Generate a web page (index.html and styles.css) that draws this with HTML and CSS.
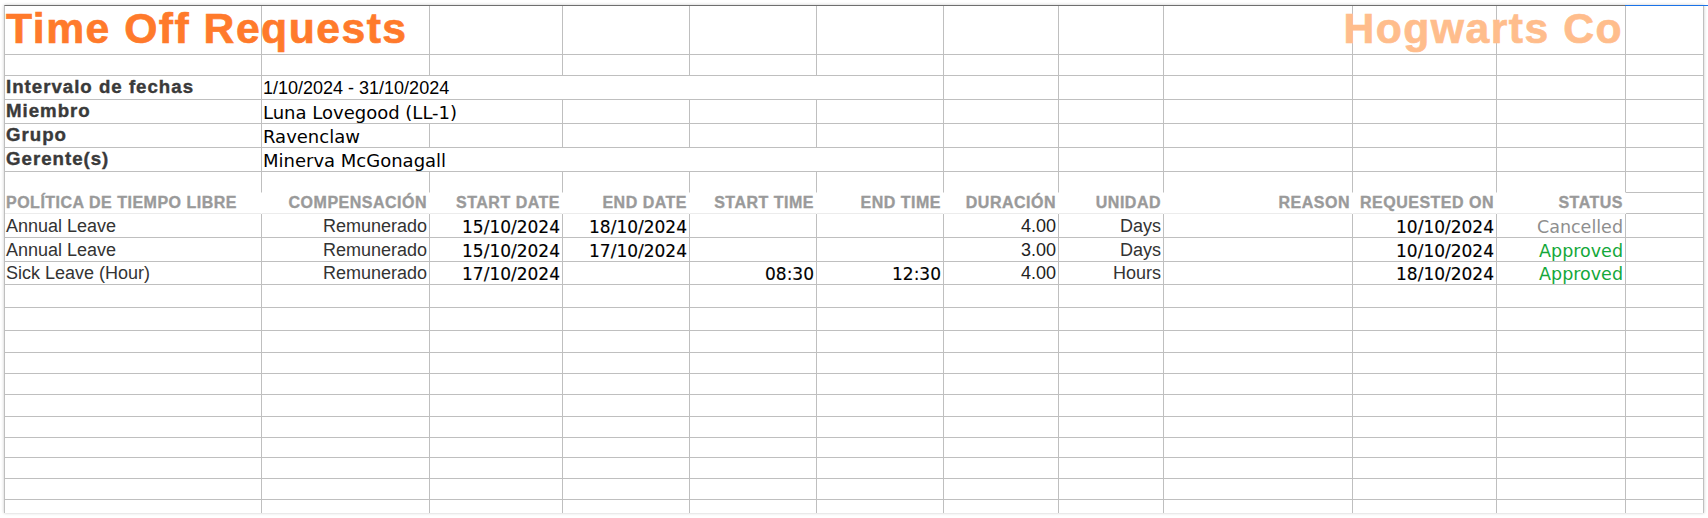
FILE: index.html
```html
<!DOCTYPE html>
<html lang="es">
<head>
<meta charset="utf-8">
<title>Time Off Requests</title>
<link rel="stylesheet" href="styles.css">
</head>
<body>
<div class="page">
  <div class="sheet">
    <div class="grid">
      <!-- row 1 -->
      <div class="c span2 title">Time Off Requests</div>
      <div class="c"></div><div class="c"></div><div class="c"></div><div class="c"></div><div class="c"></div><div class="c"></div>
      <div class="c span3 r brand">Hogwarts Co</div>
      <div class="c"></div>
      <!-- row 2 -->
      <div class="c"></div><div class="c"></div><div class="c"></div><div class="c"></div><div class="c"></div><div class="c"></div>
      <div class="c"></div><div class="c"></div><div class="c"></div><div class="c"></div><div class="c"></div><div class="c"></div>
      <!-- row 3 -->
      <div class="c lbl">Intervalo de fechas</div>
      <div class="c val span5">1/10/2024 - 31/10/2024</div>
      <div class="c"></div><div class="c"></div><div class="c"></div><div class="c"></div><div class="c"></div><div class="c"></div>
      <!-- row 4 -->
      <div class="c lbl">Miembro</div>
      <div class="c val dv span2">Luna Lovegood (LL-1)</div>
      <div class="c"></div><div class="c"></div><div class="c"></div><div class="c"></div><div class="c"></div>
      <div class="c"></div><div class="c"></div><div class="c"></div><div class="c"></div>
      <!-- row 5 -->
      <div class="c lbl">Grupo</div>
      <div class="c val dv">Ravenclaw</div>
      <div class="c"></div><div class="c"></div><div class="c"></div><div class="c"></div><div class="c"></div>
      <div class="c"></div><div class="c"></div><div class="c"></div><div class="c"></div><div class="c"></div>
      <!-- row 6 -->
      <div class="c lbl">Gerente(s)</div>
      <div class="c val dv span5">Minerva McGonagall</div>
      <div class="c"></div><div class="c"></div><div class="c"></div><div class="c"></div><div class="c"></div><div class="c"></div>
      <!-- row 7 -->
      <div class="c nob"></div><div class="c nob"></div><div class="c nob"></div><div class="c nob"></div>
      <div class="c nob"></div><div class="c nob"></div><div class="c nob"></div><div class="c nob"></div>
      <div class="c nob"></div><div class="c nob"></div><div class="c nob"></div><div class="c"></div>
      <!-- row 8: column headers -->
      <div class="c hd">POLÍTICA DE TIEMPO LIBRE</div>
      <div class="c hd r">COMPENSACIÓN</div>
      <div class="c hd r">START DATE</div>
      <div class="c hd r">END DATE</div>
      <div class="c hd r">START TIME</div>
      <div class="c hd r">END TIME</div>
      <div class="c hd r">DURACIÓN</div>
      <div class="c hd r">UNIDAD</div>
      <div class="c hd r">REASON</div>
      <div class="c hd r">REQUESTED ON</div>
      <div class="c hd r">STATUS</div>
      <div class="c"></div>
      <!-- row 9 -->
      <div class="c">Annual Leave</div>
      <div class="c r">Remunerado</div>
      <div class="c r dt">15/10/2024</div>
      <div class="c r dt">18/10/2024</div>
      <div class="c r dt"></div>
      <div class="c r dt"></div>
      <div class="c r num">4.00</div>
      <div class="c r">Days</div>
      <div class="c"></div>
      <div class="c r dt">10/10/2024</div>
      <div class="c r st cancel">Cancelled</div>
      <div class="c"></div>
      <!-- row 10 -->
      <div class="c">Annual Leave</div>
      <div class="c r">Remunerado</div>
      <div class="c r dt">15/10/2024</div>
      <div class="c r dt">17/10/2024</div>
      <div class="c r dt"></div>
      <div class="c r dt"></div>
      <div class="c r num">3.00</div>
      <div class="c r">Days</div>
      <div class="c"></div>
      <div class="c r dt">10/10/2024</div>
      <div class="c r st ok">Approved</div>
      <div class="c"></div>
      <!-- row 11 -->
      <div class="c">Sick Leave (Hour)</div>
      <div class="c r">Remunerado</div>
      <div class="c r dt">17/10/2024</div>
      <div class="c r dt"></div>
      <div class="c r dt">08:30</div>
      <div class="c r dt">12:30</div>
      <div class="c r num">4.00</div>
      <div class="c r">Hours</div>
      <div class="c"></div>
      <div class="c r dt">18/10/2024</div>
      <div class="c r st ok">Approved</div>
      <div class="c"></div>
      <!-- rows 12-22: empty -->
      <div class="c"></div><div class="c"></div><div class="c"></div><div class="c"></div><div class="c"></div><div class="c"></div><div class="c"></div><div class="c"></div><div class="c"></div><div class="c"></div><div class="c"></div><div class="c"></div>
      <div class="c"></div><div class="c"></div><div class="c"></div><div class="c"></div><div class="c"></div><div class="c"></div><div class="c"></div><div class="c"></div><div class="c"></div><div class="c"></div><div class="c"></div><div class="c"></div>
      <div class="c"></div><div class="c"></div><div class="c"></div><div class="c"></div><div class="c"></div><div class="c"></div><div class="c"></div><div class="c"></div><div class="c"></div><div class="c"></div><div class="c"></div><div class="c"></div>
      <div class="c"></div><div class="c"></div><div class="c"></div><div class="c"></div><div class="c"></div><div class="c"></div><div class="c"></div><div class="c"></div><div class="c"></div><div class="c"></div><div class="c"></div><div class="c"></div>
      <div class="c"></div><div class="c"></div><div class="c"></div><div class="c"></div><div class="c"></div><div class="c"></div><div class="c"></div><div class="c"></div><div class="c"></div><div class="c"></div><div class="c"></div><div class="c"></div>
      <div class="c"></div><div class="c"></div><div class="c"></div><div class="c"></div><div class="c"></div><div class="c"></div><div class="c"></div><div class="c"></div><div class="c"></div><div class="c"></div><div class="c"></div><div class="c"></div>
      <div class="c"></div><div class="c"></div><div class="c"></div><div class="c"></div><div class="c"></div><div class="c"></div><div class="c"></div><div class="c"></div><div class="c"></div><div class="c"></div><div class="c"></div><div class="c"></div>
      <div class="c"></div><div class="c"></div><div class="c"></div><div class="c"></div><div class="c"></div><div class="c"></div><div class="c"></div><div class="c"></div><div class="c"></div><div class="c"></div><div class="c"></div><div class="c"></div>
      <div class="c"></div><div class="c"></div><div class="c"></div><div class="c"></div><div class="c"></div><div class="c"></div><div class="c"></div><div class="c"></div><div class="c"></div><div class="c"></div><div class="c"></div><div class="c"></div>
      <div class="c"></div><div class="c"></div><div class="c"></div><div class="c"></div><div class="c"></div><div class="c"></div><div class="c"></div><div class="c"></div><div class="c"></div><div class="c"></div><div class="c"></div><div class="c"></div>
      <div class="c"></div><div class="c"></div><div class="c"></div><div class="c"></div><div class="c"></div><div class="c"></div><div class="c"></div><div class="c"></div><div class="c"></div><div class="c"></div><div class="c"></div><div class="c"></div>
    </div>
  </div>
  <div class="sel-edge"></div>
</div>
</body>
</html>
```

FILE: styles.css
```css
html, body {
  margin: 0;
  background: #ffffff;
}

.page {
  position: relative;
  padding: 5px 0 0 4px;
  height: 513px;
}

.sheet {
  width: 1700px;
  height: 508px;
  overflow: hidden;
  background: #ffffff;
  box-shadow: 0 0 3px rgba(0, 0, 0, 0.22);
}

.grid {
  display: grid;
  grid-template-columns: 257px 168px 133px 127px 127px 127px 115px 105px 189px 144px 129px 78px;
  grid-template-rows: 49px 21px 24px 24px 24px 24px 21px 21px 24px 24px 23px 23px 23px 22px 21px 21px 22px 21px 20px 21px 21px 21px;
  border-top: 1px solid #6f6f6f;
  border-left: 1px solid #bfbfbf;
}

.c {
  box-sizing: border-box;
  min-width: 0;
  display: flex;
  align-items: flex-end;
  padding: 0 2px 0 1px;
  border-right: 1px solid #bfbfbf;
  border-bottom: 1px solid #bfbfbf;
  white-space: nowrap;
  font-family: "Liberation Sans", Arial, sans-serif;
  font-size: 18px;
  color: #333333;
}

.r {
  justify-content: flex-end;
}

.span2 {
  grid-column: span 2;
}

.span3 {
  grid-column: span 3;
}

.span5 {
  grid-column: span 5;
}

/* title spans columns A-B; the column gridline stays visible behind the text */
.title {
  font-size: 42.67px;
  line-height: 44px;
  font-weight: 700;
  letter-spacing: 1.5px;
  color: #ff7a2b;
  -webkit-text-stroke: 0.7px #ff7a2b;
  padding-bottom: 4px;
  background: linear-gradient(to right, transparent 256px, #bfbfbf 256px, #bfbfbf 257px, transparent 257px);
}

/* brand spans columns I-K; two gridlines stay visible behind the text */
.brand {
  font-size: 42.67px;
  line-height: 44px;
  font-weight: 700;
  letter-spacing: 1.5px;
  color: #ffbd8c;
  -webkit-text-stroke: 0.7px #ffbd8c;
  padding-bottom: 4px;
  padding-right: 2px;
  background:
    linear-gradient(to right, transparent 188px, #bfbfbf 188px, #bfbfbf 189px, transparent 189px),
    linear-gradient(to right, transparent 332px, #bfbfbf 332px, #bfbfbf 333px, transparent 333px);
}

.lbl {
  font-size: 18.67px;
  font-weight: 700;
  letter-spacing: 1px;
  color: #3a3a3a;
  -webkit-text-stroke: 0.4px #3a3a3a;
  padding-bottom: 1.3px;
}

.val {
  color: #000000;
}

.dv {
  font-family: "DejaVu Sans", Verdana, sans-serif;
  font-size: 18px;
}

.nob {
  border-bottom-color: #ffffff;
}

.hd {
  font-size: 16px;
  font-weight: 700;
  letter-spacing: 0.5px;
  color: #9a9a9a;
  -webkit-text-stroke: 0.35px #9a9a9a;
  padding-bottom: 1.3px;
  border-right-color: #ffffff;
  border-bottom-color: #ececec;
}

.dt {
  font-family: "DejaVu Sans", Verdana, sans-serif;
  font-size: 17px;
  color: #000000;
  -webkit-text-stroke: 0.15px #000000;
}

.num {
  color: #222222;
}

.st {
  font-family: "DejaVu Sans", Verdana, sans-serif;
  font-size: 17.5px;
}

.cancel {
  color: #8e8e8e;
}

.ok {
  color: #14a83a;
}

.sel-edge {
  position: absolute;
  left: 1625px;
  top: 5px;
  width: 83px;
  height: 1px;
  background: #1a73e8;
}
```
